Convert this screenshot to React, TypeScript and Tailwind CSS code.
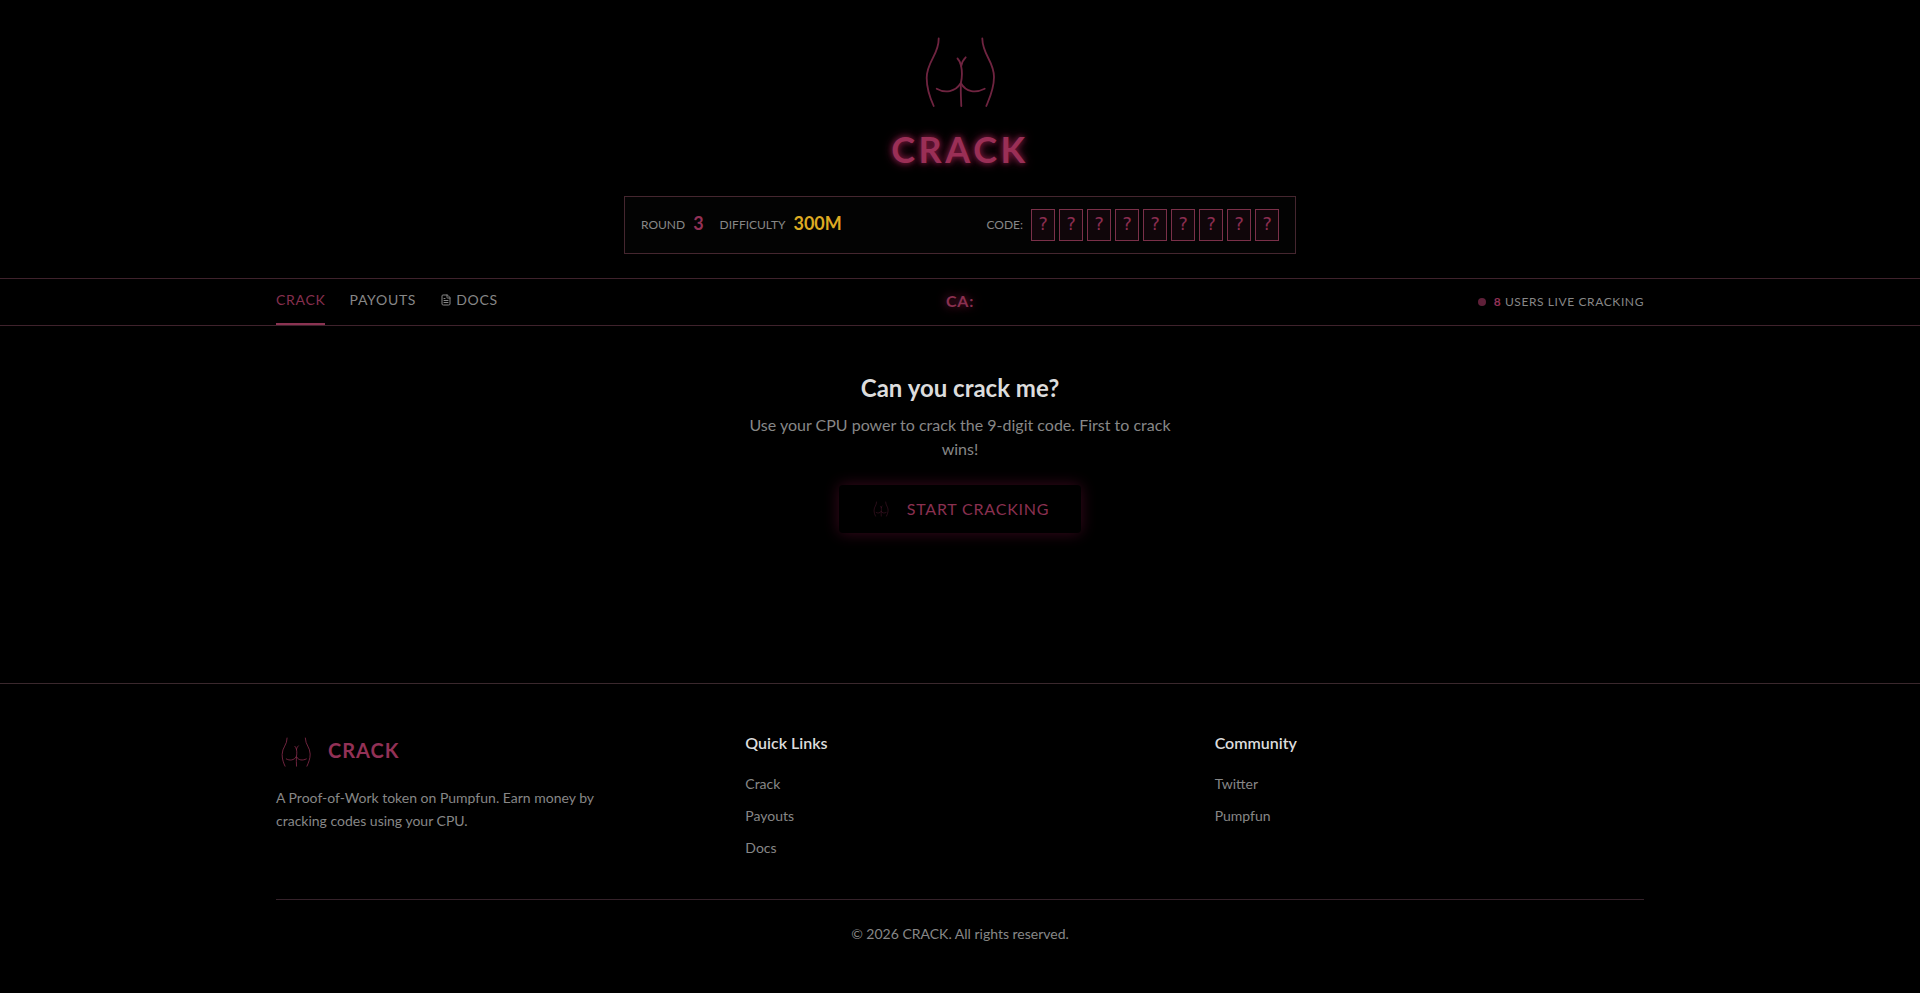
import { FileText } from "lucide-react";

const navLink =
  "flex items-center gap-1 border-b-2 pt-[11px] pb-[13px] text-sm leading-5 tracking-wider";

const footerColumns = [
  { title: "Quick Links", links: ["Crack", "Payouts", "Docs"] },
  { title: "Community", links: ["Twitter", "Pumpfun"] },
];

const Logo = ({ className }: { className?: string }) => (
  <svg
    viewBox="0 0 96 96"
    fill="none"
    stroke="currentColor"
    strokeWidth="1.8"
    strokeLinecap="round"
    className={className}
    aria-hidden="true"
  >
    <path d="M26.7 14.5C27 31 14.7 37 14.7 54C14.7 66 18.5 75 21.7 82" />
    <path d="M70.3 14.5C70.5 31 82 37 82 53C82 65 78 73 74.3 82" />
    <path d="M45.5 34.5C47 36 48.5 39 49 41.5C50.5 48 50 54 48.9 59C48.5 67 49 74 49.3 82" />
    <path d="M53.7 33.3C51.5 35.5 49.8 38 49.2 42" />
    <path d="M24.7 64.7C33 69.5 43.5 68 48.8 59C54 68.5 64 69 72.7 64.7" />
  </svg>
);

const App = () => {
  return (
    <div className="min-h-screen flex flex-col bg-black text-[#878787] font-[Lato,sans-serif]">
      <header className="flex flex-col items-center px-4 pt-6 pb-6">
        <Logo className="size-24 text-[#6f2440]" />
        <h1 className="mt-2 text-4xl leading-[42px] font-bold tracking-widest text-[#9a2f56] [text-shadow:0_0_5px_#6a1536,0_0_10px_#8c1d47]">
          CRACK
        </h1>
        <div className="mt-[26px] w-full max-w-2xl flex items-center justify-between border border-[#45262f] bg-[#030303] px-4 py-3">
          <div className="flex items-center gap-4">
            <div className="flex items-center gap-2">
              <span className="text-xs">ROUND</span>
              <span className="pb-1 text-lg leading-6 font-bold text-[#923156]">3</span>
            </div>
            <div className="flex items-center gap-2">
              <span className="text-xs">DIFFICULTY</span>
              <span className="pb-1 text-lg leading-6 font-bold text-[#ddaa22]">300M</span>
            </div>
          </div>
          <div className="flex items-center gap-2">
            <span className="text-xs">CODE:</span>
            <div className="flex gap-1">
              {Array.from({ length: 9 }, (_, i) => (
                <span
                  key={i}
                  className="w-6 h-8 pb-[2px] flex items-center justify-center border border-[#7a3049] bg-[#10060a] font-['DejaVu_Sans_Mono',monospace] text-lg text-[#8a2d50]"
                >
                  ?
                </span>
              ))}
            </div>
          </div>
        </div>
      </header>

      <nav className="border-y border-[#3f222c]">
        <div className="max-w-[1400px] mx-auto px-4 grid grid-cols-3 items-center">
          <div className="flex gap-6">
            <a href="#crack" className={`${navLink} border-[#8a3352] text-[#852f4e]`}>
              CRACK
            </a>
            <a href="#payouts" className={`${navLink} border-transparent`}>
              PAYOUTS
            </a>
            <a href="#docs" className={`${navLink} border-transparent`}>
              <FileText size={12} />
              DOCS
            </a>
          </div>
          <div className="pb-[2px] text-center text-base font-bold tracking-wider text-[#8a3050] [text-shadow:0_0_10px_#8c1d47]">
            CA:
          </div>
          <div className="flex items-center justify-end gap-2 text-xs tracking-wider">
            <span className="size-2 rounded-full bg-[#5f2039]" />
            <span>
              <span className="font-bold text-[#923156]">8</span> USERS LIVE CRACKING
            </span>
          </div>
        </div>
      </nav>

      <main className="flex-1 flex flex-col items-center px-4 pt-12">
        <h2 className="text-2xl leading-7 font-bold text-[#dcdcdc]">Can you crack me?</h2>
        <p className="mt-[11px] max-w-md text-center text-base">
          Use your CPU power to crack the 9-digit code. First to crack wins!
        </p>
        <button className="mt-6 h-12 flex items-center gap-4 rounded px-8 bg-black text-base tracking-wider text-[#8a3050] shadow-[0_0_15px_#3a091d]">
          <Logo className="size-5 text-[#6f2440]" />
          START CRACKING
        </button>
      </main>

      <footer className="border-t border-[#3a282d]">
        <div className="max-w-[1400px] mx-auto px-4 pt-12 pb-[49px]">
          <div className="grid grid-cols-3 gap-10">
            <div>
              <div className="flex items-center gap-3">
                <Logo className="size-10 text-[#943053]" />
                <span className="pb-1 text-xl font-bold tracking-wider text-[#923156]">CRACK</span>
              </div>
              <p className="mt-[14px] max-w-[330px] text-sm leading-[23px]">
                A Proof-of-Work token on Pumpfun. Earn money by cracking codes using your CPU.
              </p>
            </div>
            {footerColumns.map((column) => (
              <div key={column.title}>
                <h3 className="text-base leading-[22px] font-semibold text-[#dcdcdc]">
                  {column.title}
                </h3>
                <ul className="mt-[17px] space-y-2">
                  {column.links.map((link) => (
                    <li key={link} className="leading-6">
                      <a href={`#${link.toLowerCase()}`} className="text-sm">
                        {link}
                      </a>
                    </li>
                  ))}
                </ul>
              </div>
            ))}
          </div>
          <p className="mt-10 border-t border-[#35222a] pt-6 text-center text-sm">
            © 2026 CRACK. All rights reserved.
          </p>
        </div>
      </footer>
    </div>
  );
};

export default App;
